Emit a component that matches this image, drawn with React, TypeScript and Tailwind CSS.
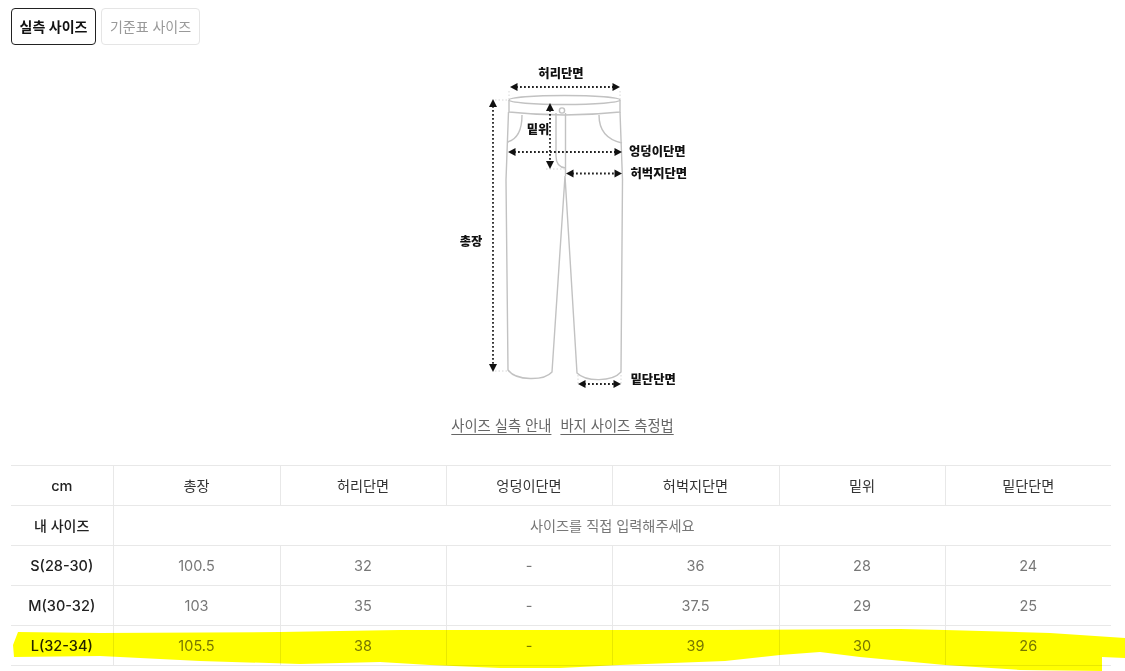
const rows = [
  { name: "내 사이즈", span: true, values: ["사이즈를 직접 입력해주세요"] },
  { name: "S(28-30)", values: ["100.5", "32", "-", "36", "28", "24"] },
  { name: "M(30-32)", values: ["103", "35", "-", "37.5", "29", "25"] },
  { name: "L(32-34)", values: ["105.5", "38", "-", "39", "30", "26"] },
];

const headers = ["총장", "허리단면", "엉덩이단면", "허벅지단면", "밑위", "밑단단면"];

function Dotted({ x1, y1, x2, y2 }: { x1: number; y1: number; x2: number; y2: number }) {
  return (
    <line
      x1={x1}
      y1={y1}
      x2={x2}
      y2={y2}
      stroke="#222"
      strokeWidth="1.8"
      strokeDasharray="1.8 2.2"
    />
  );
}

function PantsDiagram() {
  return (
    <svg viewBox="411 60 300 340" className="ml-[411px] block h-[340px] w-[300px]">
      <g fill="none" stroke="#c2c2c2" strokeWidth="1.4">
        <ellipse cx="564.5" cy="100" rx="55.5" ry="4.5" />
        <path d="M509 100V112Q564 118 620 112V100" />
        <path d="M508.5 112L506 180L508 370C516 381 544 381 552 372L565 176L577 373C586 382 612 382 621 372L622.5 180L620 112" />
        <path d="M522 115Q522 138 507.5 142" />
        <path d="M599 115Q599 138 622 143" />
        <path d="M565.5 113V176" />
        <path d="M556 113V156Q556 167 565.5 168" />
        <circle cx="562" cy="110.5" r="2.6" />
      </g>
      <g fill="none" stroke="#d6d6d6" strokeWidth="1" strokeDasharray="1.5 2">
        <path d="M509 91V99M620 91V99M495 100H508M495 371H508M578 375V384M621 375V384M546 169H565" />
      </g>
      <Dotted x1={516} y1={87} x2={614} y2={87} />
      <Dotted x1={493} y1={106} x2={493} y2={366} />
      <Dotted x1={550} y1={110} x2={550} y2={164} />
      <Dotted x1={514} y1={152} x2={616} y2={152} />
      <Dotted x1={572} y1={173.5} x2={616} y2={173.5} />
      <Dotted x1={584} y1={384} x2={615} y2={384} />
      <g fill="#111">
        <path d="M510 87L517.5 83V91Z" />
        <path d="M620 87L612.5 83V91Z" />
        <path d="M493 99L489 107H497Z" />
        <path d="M493 372L489 364H497Z" />
        <path d="M550 103L546 111H554Z" />
        <path d="M550 169L546 161H554Z" />
        <path d="M508 152L515.5 148V156Z" />
        <path d="M622 152L614.5 148V156Z" />
        <path d="M566 173.5L573.5 169.5V177.5Z" />
        <path d="M622 173.5L614.5 169.5V177.5Z" />
        <path d="M578 384L585.5 380V388Z" />
        <path d="M621 384L613.5 380V388Z" />
      </g>
      <g fill="#111" fontSize="12.3" fontWeight="800" fontFamily="Inter, 'Noto Sans CJK KR', sans-serif">
        <text x="561" y="78" textAnchor="middle">허리단면</text>
        <text x="538" y="134" textAnchor="middle">밑위</text>
        <text x="629" y="155.5">엉덩이단면</text>
        <text x="630.5" y="177.5">허벅지단면</text>
        <text x="471" y="245.5" textAnchor="middle">총장</text>
        <text x="630.5" y="383.5">밑단단면</text>
      </g>
    </svg>
  );
}

export default function App() {
  return (
    <div className="relative h-[671px] w-[1125px] overflow-hidden bg-white font-['Inter','Noto_Sans_CJK_KR',sans-serif]">
      <div className="flex gap-[5px] pl-[11px] pt-[8px]">
        <button className="h-[37px] w-[85px] rounded-[4px] border-[1.5px] border-[#222] text-[14px] font-semibold text-[#111]">
          실측 사이즈
        </button>
        <button className="h-[37px] w-[99px] rounded-[4px] border border-[#e5e5e5] text-[14px] text-[#999]">
          기준표 사이즈
        </button>
      </div>

      <div className="mt-[15px]">
        <PantsDiagram />
      </div>

      <div className="mt-[16px] flex justify-center gap-[9px] text-[14.3px] leading-[20px] text-[#666]">
        <a className="underline underline-offset-[3px]">사이즈 실측 안내</a>
        <a className="underline underline-offset-[3px]">바지 사이즈 측정법</a>
      </div>

      <table className="ml-[11px] mt-[29px] w-[1100px] table-fixed border-collapse text-center text-[14.5px]">
        <colgroup>
          <col className="w-[102px]" />
          <col className="w-[167px]" />
          <col className="w-[166px]" />
          <col className="w-[166px]" />
          <col className="w-[167px]" />
          <col className="w-[166px]" />
          <col className="w-[166px]" />
        </colgroup>
        <thead>
          <tr className="h-[40px] border-y border-[#e8e8e8]">
            <th className="font-medium text-[#222]">cm</th>
            {headers.map((h) => (
              <th key={h} className="border-l border-[#e8e8e8] text-[14.2px] font-normal text-[#333]">
                {h}
              </th>
            ))}
          </tr>
        </thead>
        <tbody>
          {rows.map((row) => (
            <tr key={row.name} className="h-[40px] border-b border-[#e8e8e8]">
              <td className={row.span ? "text-[14px] font-medium text-[#222]" : "font-medium text-[#222]"}>
                {row.name}
              </td>
              {row.span ? (
                <td colSpan={6} className="border-l border-[#e8e8e8] text-[14.2px] text-[#777]">
                  {row.values[0]}
                </td>
              ) : (
                row.values.map((v, i) => (
                  <td key={i} className="border-l border-[#e8e8e8] text-[#777]">
                    {v}
                  </td>
                ))
              )}
            </tr>
          ))}
        </tbody>
      </table>

      {/* marker scribble over the last row */}
      <svg
        viewBox="0 620 1125 51"
        className="pointer-events-none absolute left-0 top-[620px] h-[51px] w-[1125px] mix-blend-multiply"
      >
        <path
          fill="#ffff00"
          d="M18 632L100 633L280 632L400 630L725 630L900 629L945 630L1050 633L1125 638V658L1102 657V671L1020 670L945 665L860 657L820 652L780 655L725 661L620 665L560 668L500 668L430 665L380 662L300 664L200 661L100 656L14 657L13 645Z"
        />
      </svg>
    </div>
  );
}
